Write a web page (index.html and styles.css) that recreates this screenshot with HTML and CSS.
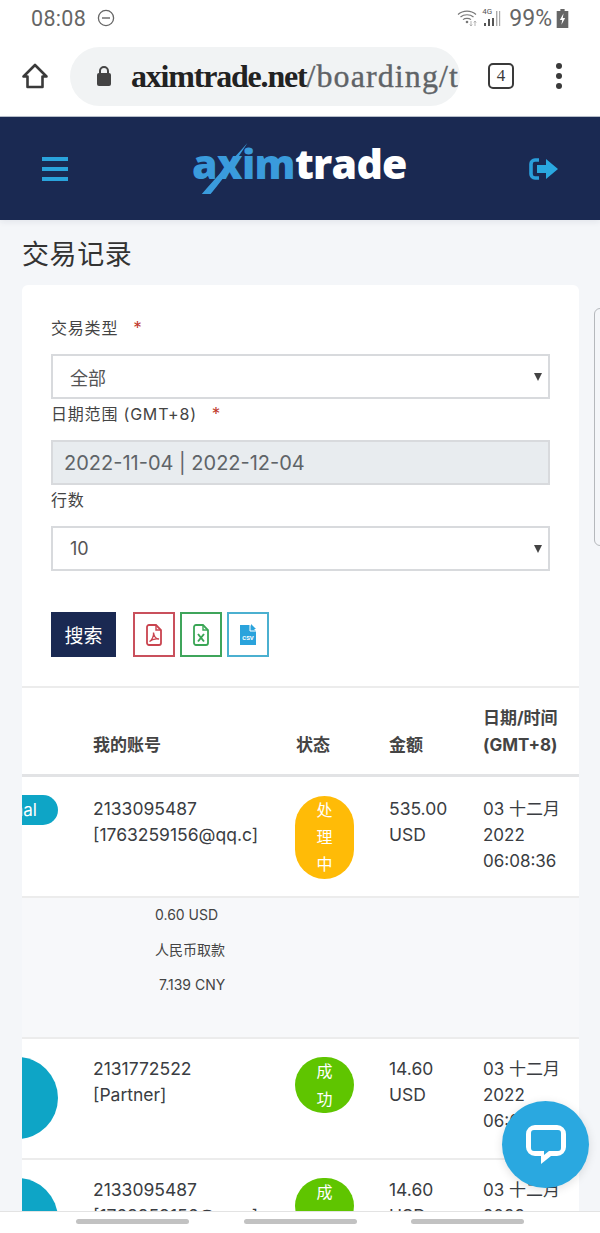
FILE: index.html
```html
<!DOCTYPE html>
<html lang="zh">
<head>
<meta charset="utf-8">
<title>交易记录</title>
<link rel="stylesheet" href="styles.css">
</head>
<body>
<div class="phone">
  <div class="status">
    <div class="status-left">
      <span class="clock">08:08</span>
      <svg class="dnd" viewBox="0 0 18 18"><circle cx="9" cy="9" r="7.6" fill="none" stroke="#666" stroke-width="1.3"/><rect x="5" y="8.3" width="8" height="1.4" fill="#666"/></svg>
    </div>
    <div class="status-right">
      <svg class="wifi" viewBox="0 0 22 18"><g fill="none" stroke="#777" stroke-width="1.2"><path d="M1 5.5C6 1 14 1 19 5.5"/><path d="M3.5 8C7 5 13 5 16.5 8"/><path d="M6 10.6C8 9 12 9 14 10.6"/></g><circle cx="10" cy="13" r="1.3" fill="#777"/><path d="M14 12v5M12.8 15.5l1.2 1.5 1.2-1.5M18 17v-5M16.8 13.5l1.2-1.5 1.2 1.5" fill="none" stroke="#aaa" stroke-width=".9"/></svg>
      <div class="signal-wrap">
        <span class="net">4G</span>
        <svg class="signal" viewBox="0 0 18 18"><path d="M1 14h2v3H1zM5 10h2v7H5zM9 9h2v8H9z" fill="#555"/><path d="M13 2h1.4v15H13zM16 2h1.2v15H16z" fill="#aaa"/></svg>
      </div>
      <span class="batt-text">99%</span>
      <svg class="batt" viewBox="0 0 11 18"><path d="M3.5 0h4v2h3.5v16H0V2h3.5z" fill="#666"/><path d="M6.5 4L3 10.5h2.2L4.5 15 8 8.5H5.8z" fill="#fff"/></svg>
    </div>
  </div>

  <div class="browser">
    <svg class="home" viewBox="0 0 28 28"><path d="M14 3L2.5 14.5H6.5V25H21.5V14.5H25.5Z" fill="none" stroke="#3a3a3a" stroke-width="2.6" stroke-linejoin="round"/></svg>
    <div class="omnibox">
      <svg class="lock" viewBox="0 0 16 22"><path d="M4 9V6a4 4 0 0 1 8 0v3" fill="none" stroke="#444" stroke-width="2"/><rect x="1" y="8" width="14" height="13" rx="2" fill="#444"/></svg>
      <span class="url"><span class="url-strong">aximtrade.net</span>/boarding/t</span>
    </div>
    <div class="tabs">4</div>
    <div class="menu-dots"><i></i><i></i><i></i></div>
  </div>

  <header class="site-header">
    <div class="burger"><i></i><i></i><i></i></div>
    <div class="logo">
      <span class="logo-blue">axim</span><span class="logo-white">trade</span>
      <svg class="logo-slash" viewBox="0 0 60 64"><path d="M58 0C47 18 30 42 12 64H1C18 44 40 20 58 0Z" fill="#3a9bdc"/></svg>
    </div>
    <svg class="logout" viewBox="0 0 30 24"><path d="M10 3H6a4 4 0 0 0-4 4v10a4 4 0 0 0 4 4h4" fill="none" stroke="#2a9fdc" stroke-width="3.6"/><path d="M8 8h9V2l12 10-12 10v-6H8z" fill="#2aa8e0"/></svg>
  </header>

  <main class="content">
    <h1 class="page-title">交易记录</h1>
    <section class="card">
      <form class="filters">
        <label class="field-label gap-first">交易类型<span class="req">*</span></label>
        <div class="select"><span>全部</span><b class="caret"></b></div>
        <label class="field-label">日期范围 (GMT+8)<span class="req">*</span></label>
        <div class="select date"><span>2022-11-04 | 2022-12-04</span></div>
        <label class="field-label">行数</label>
        <div class="select"><span>10</span><b class="caret"></b></div>
        <div class="actions">
          <button type="button" class="search">搜索</button>
          <button type="button" class="export pdf">
            <svg viewBox="0 0 16 22"><path d="M1 3a2 2 0 0 1 2-2h7l5 5v13a2 2 0 0 1-2 2H3a2 2 0 0 1-2-2z" fill="none" stroke="#c9444f" stroke-width="1.8"/><path d="M10 1v5h5" fill="none" stroke="#c9444f" stroke-width="1.4"/><path d="M3.5 17.5C6 16 8 12 7.5 8.5 8 12 10 15 13 15 10 14.5 6 15 3.5 17.5Z" fill="none" stroke="#c9444f" stroke-width="1.3"/></svg>
          </button>
          <button type="button" class="export xls">
            <svg viewBox="0 0 16 22"><path d="M1 3a2 2 0 0 1 2-2h7l5 5v13a2 2 0 0 1-2 2H3a2 2 0 0 1-2-2z" fill="none" stroke="#3aa655" stroke-width="1.8"/><path d="M10 1v5h5" fill="none" stroke="#3aa655" stroke-width="1.4"/><path d="M5 10l6 7.5M11 10l-6 7.5" stroke="#3aa655" stroke-width="2" fill="none"/></svg>
          </button>
          <button type="button" class="export csv">
            <svg viewBox="0 0 16 22"><path d="M0 1h10l6 6v14H0z" fill="#2aa3dc"/><path d="M11 0l5 5h-5z" fill="#2aa3dc"/><path d="M10 1v6h6" fill="none" stroke="#fff" stroke-width="1"/></svg>
            <span class="csv-text">CSV</span>
          </button>
        </div>
      </form>

      <div class="table">
        <div class="row head">
          <div></div>
          <div>我的账号</div>
          <div>状态</div>
          <div>金额</div>
          <div>日期/时间<br>(GMT+8)</div>
        </div>

        <div class="row r1">
          <div class="c-type"><span class="type-pill">Internal</span></div>
          <div>2133095487<br><span class="nowrap">[1763259156@qq.c]</span></div>
          <div><span class="badge processing">处<br>理<br>中</span></div>
          <div>535.00<br>USD</div>
          <div class="c-date">03 十二月<br>2022<br>06:08:36</div>
        </div>

        <div class="detail">
          <p class="d1">0.60 USD</p>
          <p class="d2">人民币取款</p>
          <p class="d3">7.139 CNY</p>
        </div>

        <div class="row r2">
          <div class="c-type"><span class="type-circle"></span></div>
          <div>2131772522<br>[Partner]</div>
          <div><span class="badge success">成<br>功</span></div>
          <div>14.60<br>USD</div>
          <div class="c-date">03 十二月<br>2022<br>06:08:36</div>
        </div>

        <div class="row r3">
          <div class="c-type"><span class="type-circle"></span></div>
          <div>2133095487<br><span class="nowrap">[1763259156@qq.c]</span></div>
          <div><span class="badge success">成<br>功</span></div>
          <div>14.60<br>USD</div>
          <div class="c-date">03 十二月<br>2022<br>06:08:36</div>
        </div>
      </div>
    </section>
  </main>

  <div class="side-tab"></div>

  <button type="button" class="chat" aria-label="chat">
    <svg viewBox="0 0 40 39"><path d="M9 0H31A9 9 0 0 1 40 9V22A9 9 0 0 1 31 31H25L15 39V31H9A9 9 0 0 1 0 22V9A9 9 0 0 1 9 0Z" fill="#fff"/><path d="M8 5H32A3 3 0 0 1 35 8V23A3 3 0 0 1 32 26H23L18 30V26H8A3 3 0 0 1 5 23V8A3 3 0 0 1 8 5Z" fill="#2aa8e0"/></svg>
  </button>

  <nav class="bottom-bar"><i></i><i></i><i></i></nav>
</div>
</body>
</html>
```

FILE: styles.css
```css
* { box-sizing: border-box; }
html, body { margin: 0; padding: 0; }
body { font-family: "Inter", "Noto Sans CJK SC", sans-serif; color: #3a3d42; background: #f4f6f9; }
.phone { position: relative; width: 600px; height: 1233px; overflow: hidden; display: flex; flex-direction: column; background: #f4f6f9; }

.status { height: 36px; flex: none; background: #fff; display: flex; justify-content: space-between; align-items: center; padding: 0 31px 0 31px; }
.status-left, .status-right { display: flex; align-items: center; }
.clock { font-family: "Roboto", sans-serif; font-size: 21.5px; color: #666; letter-spacing: .3px; }
.dnd { width: 18px; height: 18px; margin-left: 11px; }
.wifi { width: 22px; height: 18px; }
.signal-wrap { position: relative; width: 20px; height: 18px; margin-left: 3px; }
.net { position: absolute; left: 0; top: -1px; font: 8px/8px "Roboto", sans-serif; color: #555; }
.signal { width: 20px; height: 18px; display: block; }
.batt-text { font-family: "Roboto", sans-serif; font-size: 23px; color: #666; margin-left: 7px; }
.batt { width: 13px; height: 19px; margin-left: 4px; }

.browser { height: 81px; flex: none; background: #fff; display: flex; align-items: center; padding: 0 0 0 21px; border-bottom: 1px solid #b9c0cc; }
.home { width: 28px; height: 28px; flex: none; }
.omnibox { width: 390px; height: 59px; margin-left: 21px; border-radius: 30px; background: #f1f3f4; display: flex; align-items: center; padding-left: 26px; flex: none; overflow: hidden; }
.lock { width: 16px; height: 22px; flex: none; }
.url { font-family: "Liberation Serif", serif; font-size: 32px; color: #5f6367; margin-left: 19px; white-space: nowrap; letter-spacing: 1.1px; -webkit-text-stroke: .35px #5f6367; }
.url-strong { color: #222; font-weight: 700; letter-spacing: -1.2px; -webkit-text-stroke: 0; }
.tabs { width: 26px; height: 26px; margin-left: 28px; flex: none; border: 2.5px solid #3a3a3a; border-radius: 5px; font: 17px/21px "Liberation Serif", serif; text-align: center; color: #3a3a3a; }
.menu-dots { margin-left: 42px; display: flex; flex-direction: column; gap: 4px; }
.menu-dots i { display: block; width: 6px; height: 6px; border-radius: 50%; background: #3a3a3a; }

.site-header { height: 103px; flex: none; background: #1a2952; position: relative; display: flex; align-items: center; justify-content: space-between; padding: 0 41px 0 42px; box-shadow: 0 2px 6px rgba(30,40,80,.08); }
.burger { display: flex; flex-direction: column; gap: 6px; }
.burger i { display: block; width: 26px; height: 4px; background: #2aa3dc; }
.logo { position: absolute; left: 192px; top: 18px; width: 216px; height: 66px; font-family: "Open Sans", sans-serif; font-weight: 800; font-size: 41px; line-height: 56px; letter-spacing: -.7px; white-space: nowrap; }
.logo-blue { color: #3a9bdc; }
.logo-white { color: #fff; }
.logo-slash { position: absolute; left: 9px; top: 4px; width: 48px; height: 59px; }
.logout { width: 30px; height: 24px; }

.content { flex: 1; padding: 0 21px 0 22px; min-height: 0; }
.page-title { margin: 17px 0 16px; font-size: 27px; line-height: 32px; font-weight: 400; color: #333; font-family: "Noto Sans CJK SC", sans-serif; letter-spacing: .6px; }
.card { background: #fff; border-radius: 6px 6px 0 0; overflow: hidden; height: 1000px; }
.filters { padding: 31px 29px 29px; display: block; }
.field-label { display: block; font-size: 16px; line-height: 24px; color: #444; height: 24px; letter-spacing: .8px; }
.filters .gap-first { margin-bottom: 14px; }
.req { color: #c0392b; margin-left: 15px; font-size: 17px; }
.select { height: 45px; border: 2px solid #d8dadd; background: #fff; display: flex; align-items: center; justify-content: space-between; padding: 0 6px 0 17px; font-size: 18px; color: #555; margin-bottom: 3px; }
.select + .field-label { margin-bottom: 14px; }
.select.date { background: #e8ecef; font-size: 20px; padding-left: 11px; color: #5f6468; }
.caret { width: 0; height: 0; border-left: 4.5px solid transparent; border-right: 4.5px solid transparent; border-top: 8px solid #444; }

.actions { display: flex; align-items: stretch; margin-top: 41px; gap: 5px; }
.search { width: 65px; height: 45px; background: #1a2952; border: 1px solid #1a2952; color: #fff; font: 19px "Noto Sans CJK SC", sans-serif; margin-right: 12px; padding: 0; }
.export { width: 42px; height: 45px; background: #fff; border: 2px solid; padding: 0; position: relative; display: flex; align-items: center; justify-content: center; }
.export svg { width: 16px; height: 22px; }
.pdf { border-color: #c9505c; }
.xls { border-color: #3fa55b; }
.csv { border-color: #4bb0d0; }
.csv-text { position: absolute; left: 0; right: 0; top: 20px; text-align: center; font: 700 6px/8px "Roboto", sans-serif; color: #fff; }

.table { font-size: 17.5px; line-height: 26px; color: #3a3d42; }
.row { display: grid; grid-template-columns: 71px 203px 93px 94px 1fr; border-top: 2px solid #ececec; }
.head { height: 91px; border-bottom: 3px solid #e2e3e5; align-items: end; padding-bottom: 15px; font: 700 17px/27px "Inter", "Noto Sans CJK SC", sans-serif; color: #444; }
.head + .row { border-top: 0; }
.r1 { height: 119px; padding-top: 19px; }
.r2 { height: 121px; padding-top: 17px; }
.r3 { height: 120px; padding-top: 17px; }
.nowrap { white-space: nowrap; }
.c-date { font-size: 17px; }
.c-type { display: flex; justify-content: flex-end; position: relative; }
.type-pill { position: absolute; right: 35px; top: -1px; height: 30px; padding: 0 21px 0 60px; background: #0ea5c6; color: #fff; border-radius: 15px; font-size: 17px; line-height: 30px; white-space: nowrap; }
.type-circle { position: absolute; right: 35px; top: 1px; width: 82px; height: 82px; border-radius: 50%; background: #0ea5c6; }
.badge { display: block; width: 59px; margin-left: -1px; text-align: center; color: #fff; border-radius: 30px; font-size: 16px; line-height: 27px; }
.processing { background: #ffbb07; padding: 1px 0; }
.success { background: #5fc500; line-height: 28px; margin-top: 1px; }
.detail { background: #f7f8fa; border-top: 2px solid #ececec; height: 141px; padding-top: 6px; font-size: 14px; color: #444; }
.detail p { margin: 0; height: 35px; line-height: 22px; }
.d1 { padding-left: 133px; }
.d2 { padding-left: 133px; }
.d3 { padding-left: 137px; }

.side-tab { position: absolute; right: -8px; top: 308px; width: 14px; height: 238px; border: 1px solid #b5b8bc; border-radius: 6px; background: #f4f6f9; }
.chat { position: absolute; left: 502px; top: 1101px; width: 87px; height: 87px; border: 0; border-radius: 50%; background: #2aa8e0; padding: 0; display: flex; align-items: center; justify-content: center; box-shadow: 0 2px 10px rgba(0,0,0,.12); }
.chat svg { width: 40px; height: 39px; }
.bottom-bar { position: absolute; left: 0; right: 0; bottom: 0; height: 22px; background: #fff; border-top: 1px solid #e3e3e3; display: flex; justify-content: space-between; padding: 7px 76px 0; }
.bottom-bar i { display: block; width: 113px; height: 5px; border-radius: 3px; background: #c2c2c2; }
```
